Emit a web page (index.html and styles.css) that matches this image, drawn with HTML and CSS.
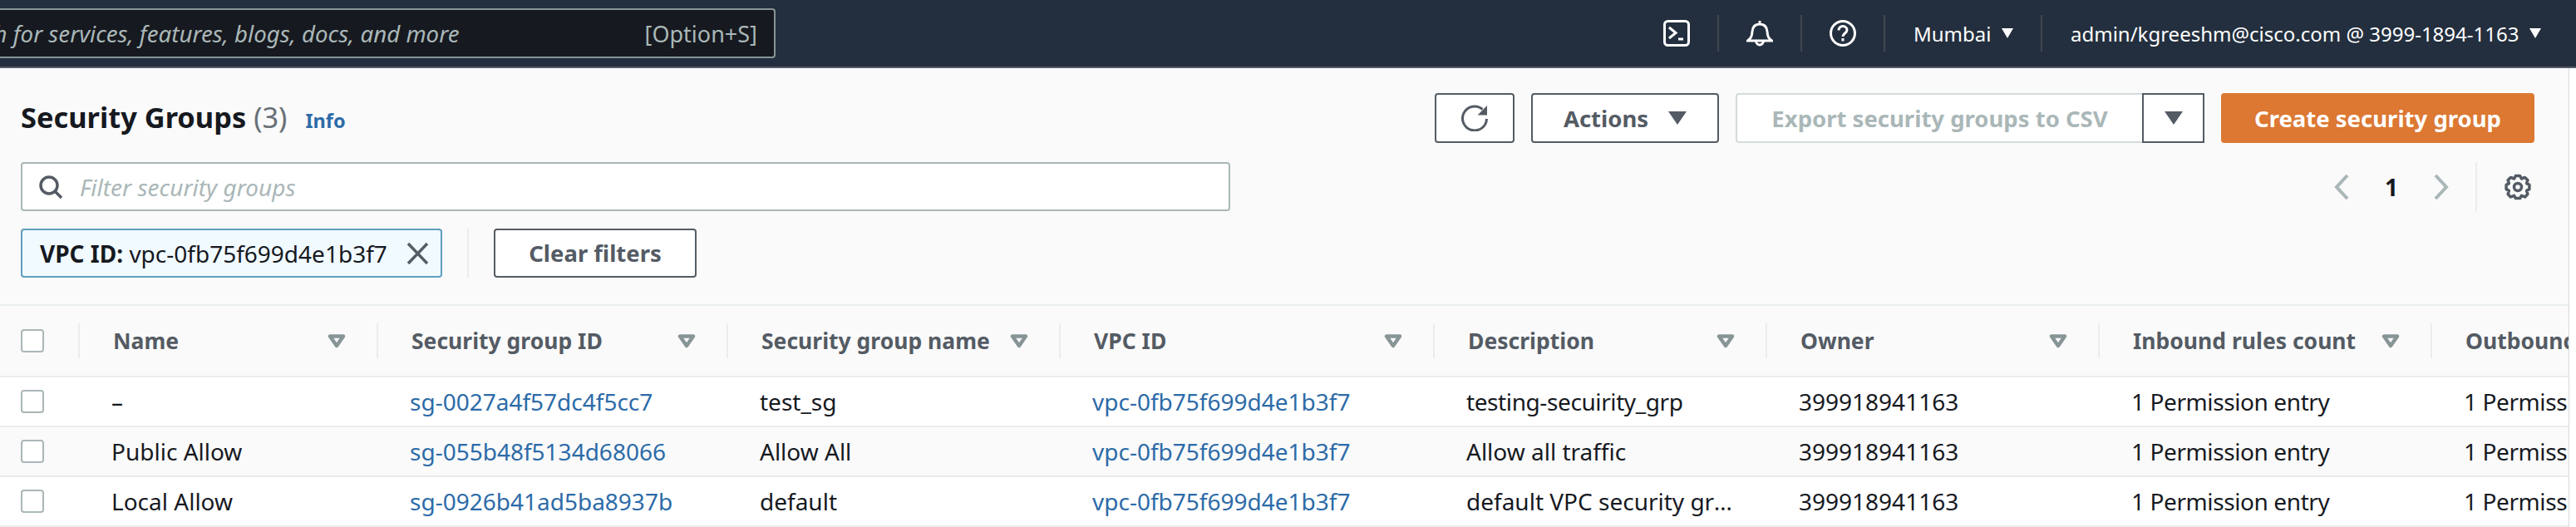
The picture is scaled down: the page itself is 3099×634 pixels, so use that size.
FILE: index.html
```html
<!DOCTYPE html>
<html lang="en">
<head>
    <meta charset="UTF-8">
    <title>Security Groups</title>
    <link rel="stylesheet" href="styles.css">
</head>
<body>
    <header class="topbar">
        <div class="search">
            <span class="search-text">Search for services, features, blogs, docs, and more</span>
            <span class="search-key">[Option+S]</span>
        </div>
        <div class="nav-icon first">
            <svg width="32" height="32" viewBox="0 0 32 32" fill="none" stroke="#fff" stroke-width="3"><rect x="1.5" y="1.5" width="29" height="29" rx="4"/><path d="M7 9l8 6.5-8 6.5M18 23h6"/></svg>
        </div>
        <div class="nav-icon">
            <svg width="32" height="32" viewBox="0 0 32 32" fill="none" stroke="#fff" stroke-width="3"><path d="M1.5 25c4-3 5-5 5.500-11C7.500 8 11 5 16 5s8.500 3 9 9c.5 6 1.500 8 5.500 11zM16 1v4M11.500 25a4.500 5 0 0 0 9 0"/></svg>
        </div>
        <div class="nav-icon">
            <svg width="32" height="32" viewBox="0 0 32 32" fill="none" stroke="#fff" stroke-width="3"><circle cx="16" cy="16" r="14.500"/><path d="M11 12.500c0-3 2.200-5 5-5s5 2 5 4.500c0 4-5 4-5 8"/><path d="M16 22v3.500"/></svg>
        </div>
        <div class="nav-text region">Mumbai <svg class="caret" width="14" height="12" viewBox="0 0 14 12"><path d="M0 0h14L7 12z"/></svg></div>
        <div class="nav-text account">admin/kgreeshm@cisco.com @ 3999-1894-1163 <svg class="caret" width="14" height="12" viewBox="0 0 14 12"><path d="M0 0h14L7 12z"/></svg></div>
    </header>

    <main class="content">
        <div class="title-row">
            <h1>Security Groups <span class="count">(3)</span> <a class="info">Info</a></h1>
            <div class="actions">
                <button class="btn icon-btn">
                    <svg width="32" height="32" viewBox="0 0 32 32"><path d="M25.500 5.500A14.500 14.500 0 1 0 30.500 17" fill="none" stroke="#545b64" stroke-width="3"/><path d="M31 1v11.500H19.500z" fill="#545b64"/></svg>
                </button>
                <button class="btn actions-btn">Actions <svg width="22" height="16" viewBox="0 0 22 16"><path d="M0 0h22L11 16z" fill="#545b64"/></svg></button>
                <div class="split">
                    <button class="btn export-btn">Export security groups to CSV</button>
                    <button class="btn split-btn"><svg width="22" height="16" viewBox="0 0 22 16"><path d="M0 0h22L11 16z" fill="#545b64"/></svg></button>
                </div>
                <button class="btn primary-btn">Create security group</button>
            </div>
        </div>

        <div class="filter-row">
            <div class="filters">
                <div class="filter-input">
                    <svg width="28" height="28" viewBox="0 0 28 28" fill="none" stroke="#545b64" stroke-width="3.500"><circle cx="12" cy="12" r="10"/><path d="M19 19l8 8"/></svg>
                    <span>Filter security groups</span>
                </div>
                <div class="chip-row">
                    <div class="chip">
                        <span><b>VPC ID:</b> vpc-0fb75f699d4e1b3f7</span>
                        <svg width="27" height="26" viewBox="0 0 27 26" fill="none" stroke="#545b64" stroke-width="3.500"><path d="M2 1l23 24M25 1L2 25"/></svg>
                    </div>
                    <div class="chip-divider"></div>
                    <button class="btn clear-btn">Clear filters</button>
                </div>
            </div>
            <div class="pager">
                <svg width="18" height="30" viewBox="0 0 18 30" fill="none" stroke="#aab7b8" stroke-width="4"><path d="M16 1L3 15l13 14"/></svg>
                <span class="page-num">1</span>
                <svg width="18" height="30" viewBox="0 0 18 30" fill="none" stroke="#aab7b8" stroke-width="4"><path d="M2 1l13 14L2 29"/></svg>
                <div class="pager-divider">
                    <svg width="32" height="32" viewBox="0 0 32 32" fill="none" stroke="#545b64" stroke-width="3.500" stroke-linejoin="round"><path d="M13.400 2.500h5.200l1.800 3.500 4.200-1.600 3.300 3.300-1.300 3.900 3.300 1.800v5.200l-3.300 1.800 1.300 4.200-3.300 3.300-4.200-1.600-1.800 3.300h-5.200l-1.800-3.300-4.200 1.600-3.300-3.300 1.300-4.200-3.300-1.800v-5.200l3.300-1.800-1.300-3.900 3.300-3.300 4.200 1.600z"/><circle cx="16" cy="16" r="4.500"/></svg>
                </div>
            </div>
        </div>

        <table class="groups">
            <colgroup>
                <col class="c-check"><col class="c-name"><col class="c-id"><col class="c-sgname"><col class="c-vpc"><col class="c-desc"><col class="c-owner"><col class="c-in"><col class="c-out">
            </colgroup>
            <thead>
                <tr>
                    <th class="check-cell"><span class="check"></span></th>
                    <th><div class="th-inner"><span>Name</span><svg class="sort" width="22" height="17" viewBox="0 0 22 17"><path d="M3 2.500h16L11 14z"/></svg></div></th>
                    <th><div class="th-inner"><span>Security group ID</span><svg class="sort" width="22" height="17" viewBox="0 0 22 17"><path d="M3 2.500h16L11 14z"/></svg></div></th>
                    <th><div class="th-inner"><span>Security group name</span><svg class="sort" width="22" height="17" viewBox="0 0 22 17"><path d="M3 2.500h16L11 14z"/></svg></div></th>
                    <th><div class="th-inner"><span>VPC ID</span><svg class="sort" width="22" height="17" viewBox="0 0 22 17"><path d="M3 2.500h16L11 14z"/></svg></div></th>
                    <th><div class="th-inner"><span>Description</span><svg class="sort" width="22" height="17" viewBox="0 0 22 17"><path d="M3 2.500h16L11 14z"/></svg></div></th>
                    <th><div class="th-inner"><span>Owner</span><svg class="sort" width="22" height="17" viewBox="0 0 22 17"><path d="M3 2.500h16L11 14z"/></svg></div></th>
                    <th><div class="th-inner"><span>Inbound rules count</span><svg class="sort" width="22" height="17" viewBox="0 0 22 17"><path d="M3 2.500h16L11 14z"/></svg></div></th>
                    <th><div class="th-inner last"><span>Outbound rules count</span></div></th>
                </tr>
            </thead>
            <tbody>
                <tr>
                    <td class="check-cell"><span class="check"></span></td>
                    <td>–</td>
                    <td><a>sg-0027a4f57dc4f5cc7</a></td>
                    <td>test_sg</td>
                    <td><a>vpc-0fb75f699d4e1b3f7</a></td>
                    <td class="tight">testing-secuirity_grp</td>
                    <td>399918941163</td>
                    <td class="tight">1 Permission entry</td>
                    <td class="tight">1 Permission entry</td>
                </tr>
                <tr>
                    <td class="check-cell"><span class="check"></span></td>
                    <td>Public Allow</td>
                    <td><a>sg-055b48f5134d68066</a></td>
                    <td>Allow All</td>
                    <td><a>vpc-0fb75f699d4e1b3f7</a></td>
                    <td>Allow all traffic</td>
                    <td>399918941163</td>
                    <td class="tight">1 Permission entry</td>
                    <td class="tight">1 Permission entry</td>
                </tr>
                <tr>
                    <td class="check-cell"><span class="check"></span></td>
                    <td>Local Allow</td>
                    <td><a>sg-0926b41ad5ba8937b</a></td>
                    <td>default</td>
                    <td><a>vpc-0fb75f699d4e1b3f7</a></td>
                    <td>default VPC security group</td>
                    <td>399918941163</td>
                    <td class="tight">1 Permission entry</td>
                    <td class="tight">1 Permission entry</td>
                </tr>
            </tbody>
        </table>
    </main>
</body>
</html>
```

FILE: styles.css
```css
html, body {
    margin: 0;
    height: 634px;
    overflow: hidden;
    background-color: #fff;
    font-family: "Noto Sans", sans-serif;
    font-size: 28px;
    color: #16191f;
}

svg {
    display: block;
    flex: none;
}

/* top bar */
.topbar {
    display: flex;
    align-items: center;
    height: 80px;
    background-color: #232f3e;
    border-bottom: 2px solid #545b64;
    color: #fff;
    overflow: hidden;
}

.search {
    display: flex;
    justify-content: space-between;
    align-items: center;
    box-sizing: border-box;
    flex: none;
    width: 1019px;
    height: 60px;
    margin-left: -86px;
    padding: 0 20px 0 10px;
    background-color: #16191f;
    border: 2px solid #879596;
    border-radius: 4px;
    color: #aab7b8;
}

.search-text {
    font-size: 27.700px;
    font-style: italic;
}

.search-key {
    font-size: 27px;
}

.nav-icon {
    display: flex;
    justify-content: center;
    align-items: center;
    flex: none;
    box-sizing: border-box;
    width: 100px;
    height: 44px;
    border-right: 2px solid #414750;
}

.nav-icon.first {
    margin-left: 1035px;
}

.nav-text {
    display: flex;
    align-items: center;
    gap: 13px;
    font-size: 24px;
    white-space: nowrap;
}

.region {
    box-sizing: border-box;
    width: 189px;
    height: 44px;
    padding-left: 34px;
    border-right: 2px solid #414750;
}

.account {
    padding-left: 34px;
}

.caret path {
    fill: #fff;
}

/* page content */
.content {
    box-sizing: border-box;
    width: 3091px;
    height: 552px;
    background-color: #fafafa;
    border-right: 1px solid #d5dbdb;
    overflow: hidden;
}

.title-row {
    display: flex;
    justify-content: space-between;
    align-items: center;
    padding: 30px 41px 0 25px;
}

h1 {
    margin: 0 0 3px;
    font-size: 34.400px;
    font-weight: 700;
}

.count {
    font-weight: 400;
    color: #687078;
}

.info {
    margin-left: 13px;
    font-size: 23.500px;
    font-weight: 700;
    color: #2d6ba8;
}

.actions {
    display: flex;
    gap: 20px;
}

.btn {
    display: flex;
    justify-content: center;
    align-items: center;
    box-sizing: border-box;
    height: 60px;
    background-color: #fff;
    border: 2px solid #545b64;
    border-radius: 4px;
    font-family: inherit;
    font-size: 27.500px;
    font-weight: 700;
    color: #545b64;
}

.icon-btn {
    width: 96px;
}

.actions-btn {
    gap: 24px;
    width: 226px;
}

.split {
    display: flex;
}

.export-btn {
    width: 489px;
    border-color: #d5dbdb;
    border-right: none;
    border-radius: 4px 0 0 4px;
    color: #aab7b8;
}

.split-btn {
    width: 75px;
    border-radius: 0;
}

.primary-btn {
    width: 377px;
    background-color: #dc7832;
    border-color: #dc7832;
    color: #fff;
}

.filter-row {
    display: flex;
    justify-content: space-between;
    padding: 23px 45px 0 25px;
}

.filters {
    width: 1455px;
}

.filter-input {
    display: flex;
    align-items: center;
    gap: 21px;
    box-sizing: border-box;
    height: 59px;
    padding-left: 20px;
    background-color: #fff;
    border: 2px solid #aab7b8;
    border-radius: 4px;
    font-style: italic;
    color: #aab7b8;
}

.chip-row {
    display: flex;
    align-items: stretch;
    margin-top: 21px;
}

.chip {
    display: flex;
    justify-content: space-between;
    align-items: center;
    box-sizing: border-box;
    width: 507px;
    height: 59px;
    padding: 0 14px 0 21px;
    background-color: #f1faff;
    border: 2px solid #5f9fbd;
    border-radius: 4px;
}

.chip-divider {
    width: 2px;
    margin: 0 30px;
    background-color: #eaeded;
}

.clear-btn {
    width: 244px;
    height: 59px;
}

.pager {
    display: flex;
    align-items: center;
    height: 60px;
    color: #16191f;
}

.page-num {
    width: 102px;
    font-weight: 700;
    text-align: center;
}

.pager-divider {
    display: flex;
    align-items: center;
    justify-content: flex-end;
    box-sizing: border-box;
    width: 67px;
    height: 60px;
    margin-left: 32px;
    border-left: 2px solid #eaeded;
}

/* table */
.groups {
    table-layout: fixed;
    width: 3090px;
    margin-top: 32px;
    border-collapse: collapse;
    white-space: nowrap;
}

.c-check { width: 94px; }
.c-name { width: 359px; }
.c-id { width: 421px; }
.c-sgname { width: 400px; }
.c-vpc { width: 450px; }
.c-desc { width: 400px; }
.c-owner { width: 400px; }
.c-in { width: 400px; }
.c-out { width: 166px; }

.groups th {
    height: 84px;
    padding: 0;
    background-color: #fafafa;
    border-top: 2px solid #eaeded;
    border-bottom: 2px solid #eaeded;
    font-size: 26.500px;
    font-weight: 700;
    text-align: left;
    color: #545b64;
}

.th-inner {
    display: flex;
    justify-content: space-between;
    align-items: center;
    box-sizing: border-box;
    height: 42px;
    padding: 0 37px 0 40px;
    border-left: 2px solid #eaeded;
    overflow: hidden;
}

.th-inner.last {
    padding-right: 0;
}

.sort path {
    fill: none;
    stroke: #879596;
    stroke-width: 4.500;
    stroke-linejoin: round;
}

.groups td {
    height: 58px;
    padding: 0 40px;
    border-bottom: 2px solid #eaeded;
    overflow: hidden;
    text-overflow: ellipsis;
    background-color: #fff;
}

.groups tbody tr:nth-child(2) td {
    background-color: #fafafa;
}

.groups td:last-child {
    padding-right: 0;
    text-overflow: clip;
}

.groups td.tight {
    letter-spacing: -0.400px;
}

.groups td a {
    color: #2d6ba8;
}

.groups .check-cell {
    padding: 0 0 0 25px;
}

.check {
    display: block;
    box-sizing: border-box;
    width: 28px;
    height: 28px;
    background-color: #fff;
    border: 2px solid #aab7b8;
    border-radius: 4px;
}
```
